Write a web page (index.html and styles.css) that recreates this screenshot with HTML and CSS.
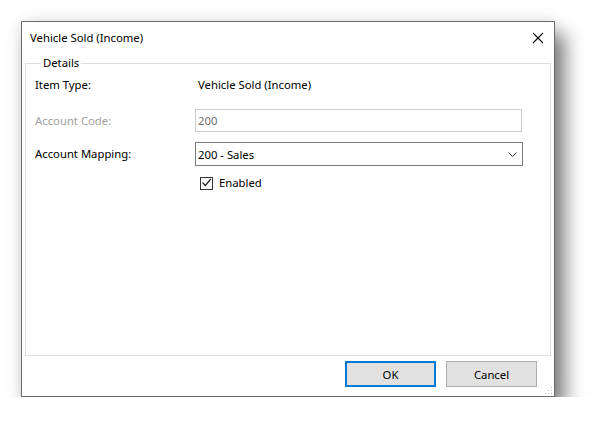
FILE: index.html
```html
<!DOCTYPE html>
<html>
<head>
<meta charset="utf-8">
<link rel="stylesheet" href="styles.css">
</head>
<body>
<div class="dialog">
  <div class="titlebar">
    <span class="title">Vehicle Sold (Income)</span>
    <svg class="close" width="12" height="12" viewBox="0 0 12 12"><path d="M1 1 L11 11 M11 1 L1 11" stroke="#000" stroke-width="1.1" fill="none"/></svg>
  </div>
  <fieldset class="group">
    <legend>Details</legend>
    <div class="row r1">
      <div class="label">Item Type:</div>
      <div class="value">Vehicle Sold (Income)</div>
    </div>
    <div class="row r2">
      <div class="label disabled">Account Code:</div>
      <div class="input">200</div>
    </div>
    <div class="row r3">
      <div class="label">Account Mapping:</div>
      <div class="combo"><span>200 - Sales</span>
        <svg width="9" height="5" viewBox="0 0 9 5"><path d="M0.5 0.5 L4.5 4.5 L8.5 0.5" stroke="#333" stroke-width="1" fill="none"/></svg>
      </div>
    </div>
    <div class="row r4">
      <div class="label"></div>
      <label class="check"><span class="box"><svg width="11" height="11" viewBox="0 0 11 11"><path d="M1.5 5.5 L4.3 8.5 L9.8 2" stroke="#222" stroke-width="1.2" fill="none"/></svg></span>Enabled</label>
    </div>
  </fieldset>
  <div class="buttons">
    <div class="btn default">OK</div>
    <div class="btn">Cancel</div>
  </div>
  <svg class="grip" width="8" height="8" viewBox="0 0 8 8"><g fill="#bdbdbd"><rect x="6" y="0" width="1" height="1"/><rect x="6" y="3" width="1" height="1"/><rect x="6" y="6" width="1" height="1"/><rect x="3" y="3" width="1" height="1"/><rect x="3" y="6" width="1" height="1"/><rect x="0" y="6" width="1" height="1"/></g></svg>
</div>
</body>
</html>
```

FILE: styles.css
```css
html, body {
  margin: 0;
  padding: 0;
  background: #fff;
}
body {
  padding: 21px 0 0 21px;
  font-family: "Noto Sans", "Open Sans", sans-serif;
  font-size: 11.3px;
  color: #000;
}
.dialog {
  position: relative;
  box-sizing: border-box;
  width: 534px;
  height: 376px;
  background: #fff;
  border: 1px solid #6b6b6b;
  box-shadow: 10px 13px 18px rgba(0,0,0,0.5), 0 0 14px rgba(0,0,0,0.1);
  display: flex;
  flex-direction: column;
}
.titlebar {
  height: 30px;
  display: flex;
  align-items: center;
  justify-content: space-between;
  padding: 0 10px 0 8px;
}
.title { line-height: 16px; margin-top: 1px; }
.close { margin-top: 1px; }
.group {
  margin: 3px 3px 0 3px;
  padding: 6px 0 0 9px;
  border: 1px solid #dcdcdc;
  height: 301px;
  box-sizing: border-box;
}
.group legend {
  padding: 0 2px;
  margin-left: 6px;
  line-height: 16px;
}
.row {
  display: flex;
  align-items: center;
}
.label {
  width: 160px;
  flex: none;
  line-height: 16px;
}
.label.disabled { color: #a0a0a0; }
.r1 { height: 16px; }
.r2 { margin-top: 16px; height: 23px; }
.r3 { margin-top: 10px; height: 24px; }
.r4 { margin-top: 10px; height: 14px; }
.value { padding-left: 3px; line-height: 16px; }
.input {
  box-sizing: border-box;
  width: 327px;
  height: 23px;
  border: 1px solid #cccccc;
  color: #6d6d6d;
  padding-left: 2px;
  line-height: 21px;
}
.combo {
  box-sizing: border-box;
  width: 328px;
  height: 24px;
  border: 1px solid #7a7a7a;
  display: flex;
  align-items: center;
  justify-content: space-between;
  padding: 0 5px 0 2px;
}
.check {
  display: flex;
  align-items: center;
  gap: 6px;
  padding-left: 5px;
  line-height: 16px;
}
.box {
  box-sizing: border-box;
  width: 13px;
  height: 13px;
  border: 1px solid #333;
  display: flex;
  align-items: center;
  justify-content: center;
}
.box svg { margin: -1px 0 0 0; }
.buttons {
  display: flex;
  justify-content: flex-end;
  gap: 10px;
  padding: 5px 17px 0 0;
}
.btn {
  box-sizing: border-box;
  width: 91px;
  height: 26px;
  background: #e1e1e1;
  border: 1px solid #adadad;
  display: flex;
  align-items: center;
  justify-content: center;
}
.btn.default { border: 2px solid #0078d7; }
.grip {
  position: absolute;
  right: 1px;
  bottom: 1px;
}
```
